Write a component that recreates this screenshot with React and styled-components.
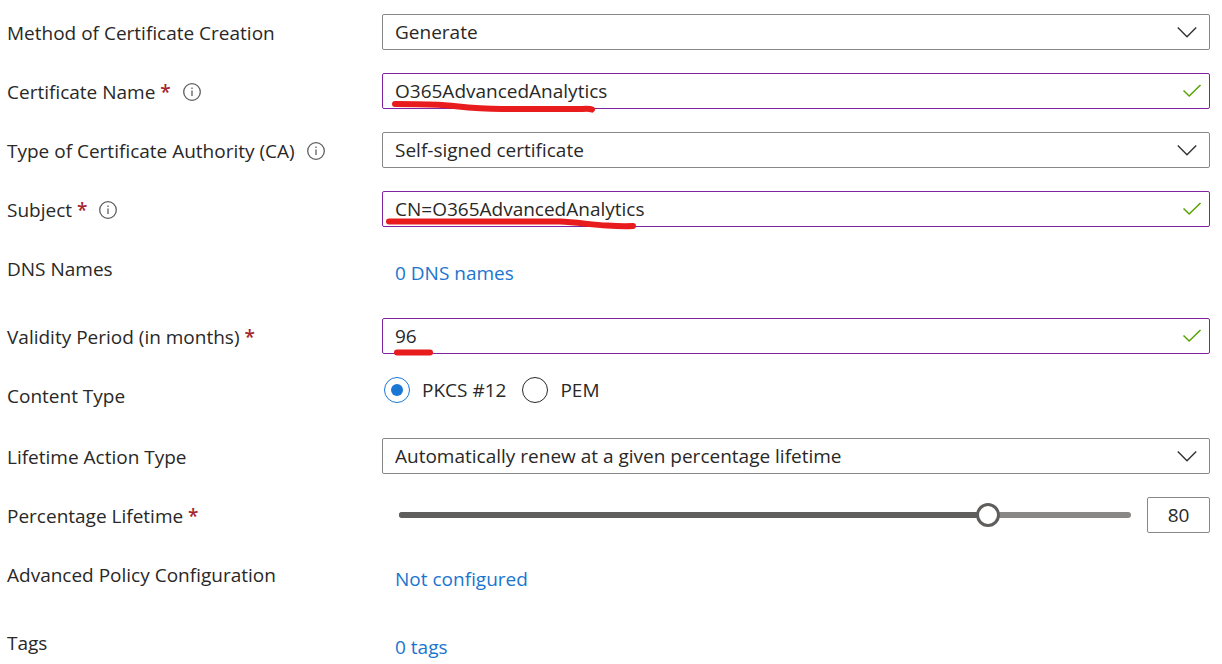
import React, { useState } from "react";
import styled, { createGlobalStyle } from "styled-components";

const GlobalStyle = createGlobalStyle`
  *, *::before, *::after { box-sizing: border-box; }
  body { margin: 0; background: #fff; }
  body, button, input, select {
    font-family: "Open Sans", "Noto Sans", sans-serif;
    font-size: 19px;
    line-height: 26px;
    color: #292827;
  }
`;

const Form = styled.form`
  display: flex;
  flex-direction: column;
  gap: 23px;
  padding: 14px 12px 0 7px;
`;

const Row = styled.div`
  display: grid;
  grid-template-columns: 375px minmax(0, 1fr);
  min-height: ${(p) => p.$height || 36}px;
  align-items: start;
`;

const LabelCell = styled.div`
  display: flex;
  align-items: center;
  height: 36px;
  padding-top: 2px;
  gap: 12px;
  white-space: nowrap;
`;

const Required = styled.span`
  color: #a4262c;
  font-weight: 600;
`;

const InfoButton = styled.button`
  display: flex;
  padding: 0;
  border: 0;
  background: none;
  color: #605e5c;
`;

const Field = styled.div`
  position: relative;
  display: flex;
`;

const control = `
  width: 100%;
  height: 36px;
  margin: 0;
  border-radius: 2px;
  background: #fff;
  outline: none;
`;

const Select = styled.select`
  ${control}
  appearance: none;
  padding: 0 48px 0 12px;
  border: 1px solid #8a8886;
`;

const TextInput = styled.input`
  ${control}
  padding: 0 40px 1px 12px;
  border: 1px solid #8023a0;
`;

const TrailingIcon = styled.svg`
  position: absolute;
  top: ${(p) => p.$top}px;
  right: ${(p) => p.$right}px;
  pointer-events: none;
`;

const Marker = styled.svg`
  position: absolute;
  top: 0;
  left: 0;
  overflow: visible;
  pointer-events: none;
`;

const Link = styled.a`
  justify-self: start;
  padding: 10px 0 0 13px;
  color: #1a75cf;
  text-decoration: none;
`;

const RadioGroup = styled.div`
  display: flex;
  gap: 16px;
  padding-left: 2px;
`;

const RadioLabel = styled.label`
  display: flex;
  align-items: center;
  gap: 12px;
`;

const Radio = styled.input`
  appearance: none;
  display: grid;
  place-items: center;
  width: 26px;
  height: 26px;
  margin: 0;
  border: 1px solid #292827;
  border-radius: 50%;
  &:checked { border-color: #1a78d4; }
  &:checked::before {
    content: "";
    width: 12px;
    height: 12px;
    border-radius: 50%;
    background: #1a78d4;
  }
`;

const SliderField = styled.div`
  display: flex;
  align-items: center;
  gap: 16px;
  padding-left: 17px;
`;

const Slider = styled.div`
  flex: 1;
  display: grid;
  align-items: center;
  & > * { grid-area: 1 / 1; }
`;

const Rail = styled.div`
  height: 6px;
  border-radius: 3px;
  background: #8a8886;
  overflow: hidden;
`;

const Fill = styled.div`
  height: 100%;
  background: #605e5c;
`;

const Range = styled.input`
  appearance: none;
  height: 24px;
  margin: 0 -13px 0 0;
  background: transparent;
  outline: none;
  &::-webkit-slider-thumb {
    appearance: none;
    width: 24px;
    height: 24px;
    border: 3px solid #605e5c;
    border-radius: 50%;
    background: #fff;
  }
`;

const PercentInput = styled.input`
  width: 63px;
  height: 36px;
  padding: 0;
  border: 1px solid #8a8886;
  border-radius: 2px;
  text-align: center;
`;

function InfoIcon({ about }) {
  return (
    <InfoButton type="button" aria-label={`About ${about}`}>
      <svg width="18" height="18" viewBox="0 0 18 18" fill="none" stroke="currentColor">
        <circle cx="9" cy="9" r="8.3" strokeWidth="1.3" />
        <path d="M9 7.5v5.5M9 4.6v1.4" strokeWidth="1.3" />
      </svg>
    </InfoButton>
  );
}

function Label({ htmlFor, id, text, required, info }) {
  return (
    <LabelCell>
      <label htmlFor={htmlFor} id={id}>
        {text}
        {required && <Required> *</Required>}
      </label>
      {info && <InfoIcon about={text} />}
    </LabelCell>
  );
}

function SelectRow({ id, label, info, option }) {
  return (
    <Row>
      <Label htmlFor={id} text={label} info={info} />
      <Field>
        <Select id={id}>
          <option>{option}</option>
        </Select>
        <TrailingIcon $top={8} $right={13} width="20" height="20" fill="none" stroke="#323130" strokeWidth="1.4">
          <path d="M.8 5.500l9.2 9.2L19.2 5.500" />
        </TrailingIcon>
      </Field>
    </Row>
  );
}

function InputRow({ id, label, info, value, marker }) {
  return (
    <Row>
      <Label htmlFor={id} text={label} required info={info} />
      <Field>
        <TextInput id={id} type="text" defaultValue={value} required />
        <TrailingIcon $top={7} $right={8} width="20" height="20" fill="none" stroke="#57a300" strokeWidth="1.5">
          <path d="M1.5 10.5l5.7 5.5L18.5 5" />
        </TrailingIcon>
        <Marker
          width="260"
          height="40"
          fill="none"
          stroke="#e81c1c"
          strokeWidth="6"
          strokeLinecap="round"
          strokeLinejoin="round"
          aria-hidden="true"
        >
          <path d={marker} />
        </Marker>
      </Field>
    </Row>
  );
}

function LinkRow({ label, link }) {
  return (
    <Row $height={45}>
      <Label text={label} />
      <Link href="#">{link}</Link>
    </Row>
  );
}

export default function App() {
  const [percent, setPercent] = useState(80);
  const update = (e) => setPercent(e.target.value);

  return (
    <>
      <GlobalStyle />
      <Form>
        <SelectRow id="method" label="Method of Certificate Creation" option="Generate" />
        <InputRow
          id="name"
          label="Certificate Name"
          info
          value="O365AdvancedAnalytics"
          marker="M13 31C30 31 45 31 60 32S90 36 120 36H200Q208 35.500 210 36.500"
        />
        <SelectRow id="ca" label="Type of Certificate Authority (CA)" info option="Self-signed certificate" />
        <InputRow
          id="subject"
          label="Subject"
          info
          value="CN=O365AdvancedAnalytics"
          marker="M7 30.500H178C195 31 210 34 225 34.500Q240 35.500 251 35"
        />
        <LinkRow label="DNS Names" link="0 DNS names" />
        <InputRow id="validity" label="Validity Period (in months)" value="96" marker="M15 34.500H48" />
        <Row $height={38}>
          <Label id="content-type" text="Content Type" />
          <RadioGroup role="radiogroup" aria-labelledby="content-type">
            <RadioLabel>
              <Radio type="radio" name="content" defaultChecked />
              PKCS #12
            </RadioLabel>
            <RadioLabel>
              <Radio type="radio" name="content" />
              PEM
            </RadioLabel>
          </RadioGroup>
        </Row>
        <SelectRow
          id="action"
          label="Lifetime Action Type"
          option="Automatically renew at a given percentage lifetime"
        />
        <Row>
          <Label htmlFor="lifetime" text="Percentage Lifetime" required />
          <SliderField>
            <Slider>
              <Rail>
                <Fill style={{ width: `${percent}%` }} />
              </Rail>
              <Range id="lifetime" type="range" min="0" max="100" value={percent} onChange={update} />
            </Slider>
            <PercentInput type="text" aria-label="Percentage Lifetime value" value={percent} onChange={update} />
          </SliderField>
        </Row>
        <LinkRow label="Advanced Policy Configuration" link="Not configured" />
        <LinkRow label="Tags" link="0 tags" />
      </Form>
    </>
  );
}
